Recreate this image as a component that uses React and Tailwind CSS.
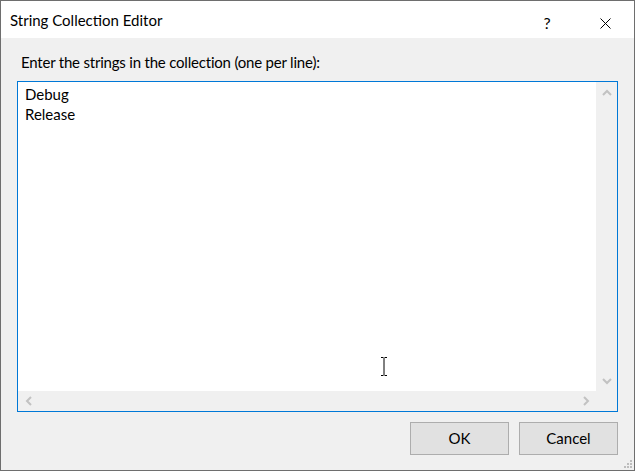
import React from 'react';

const font = { fontFamily: 'Lato, "Noto Sans", "Liberation Sans", sans-serif' };

const Chevron = ({ dir }) => {
  const paths = {
    up: 'M1 6 L5 2 L9 6',
    down: 'M1 2 L5 6 L9 2',
    left: 'M6 1 L2 5 L6 9',
    right: 'M2 1 L6 5 L2 9',
  };
  const vertical = dir === 'up' || dir === 'down';
  return (
    <svg
      width={vertical ? 10 : 8}
      height={vertical ? 8 : 10}
      viewBox={vertical ? '0 0 10 8' : '0 0 8 10'}
      fill="none"
      stroke="#c2c2c2"
      strokeWidth="2"
    >
      <path d={paths[dir]} />
    </svg>
  );
};

const App = () => {
  return (
    <div
      className="relative flex h-[471px] w-[635px] flex-col border border-[#6e6e6e] bg-[#f0f0f0] text-[15px] text-black"
      style={font}
    >
      {/* title bar */}
      <div className="flex h-[37px] bg-white">
        <div className="flex-1 pl-[9px] pt-[9px] leading-[20px]">String Collection Editor</div>
        <div className="flex w-[58px] justify-center pt-[12px] text-[16px] leading-[20px]">?</div>
        <div className="flex w-[58px] justify-center pt-[17px]">
          <svg width="11" height="11" viewBox="0 0 11 11" stroke="#000" strokeWidth="1">
            <path d="M0.5 0.5 L10.5 10.5 M10.5 0.5 L0.5 10.5" />
          </svg>
        </div>
      </div>

      {/* body */}
      <div className="flex flex-1 flex-col px-[16px]">
        <div className="pl-[4px] pt-[14px] leading-[20px] tracking-[-0.2px]">
          Enter the strings in the collection (one per line):
        </div>

        <div className="mt-[9px] flex h-[331px] w-[601px] flex-col border border-[#0078d7] bg-white">
          <div className="flex flex-1">
            <div className="flex-1 pl-[7px] pt-[2px] leading-[20px]">
              <div>Debug</div>
              <div>Release</div>
            </div>
            <div className="flex w-[21px] flex-col items-center justify-between bg-[#f0f0f0] pb-[6px] pt-[7px]">
              <Chevron dir="up" />
              <Chevron dir="down" />
            </div>
          </div>
          <div className="flex h-[20px] bg-[#f0f0f0]">
            <div className="ml-[1px] flex flex-1 items-center justify-between pl-[6px] pr-[6px]">
              <Chevron dir="left" />
              <Chevron dir="right" />
            </div>
            <div className="w-[21px]" />
          </div>
        </div>

        <div className="mt-[10px] flex justify-end gap-[10px]">
          <button className="h-[33px] w-[99px] border border-[#adadad] bg-[#e1e1e1] pb-[2px] leading-[20px]">OK</button>
          <button className="h-[33px] w-[99px] border border-[#adadad] bg-[#e1e1e1] pb-[2px] leading-[20px]">Cancel</button>
        </div>
      </div>

      {/* text cursor */}
      <svg className="absolute left-[379px] top-[356px]" width="8" height="19" viewBox="0 0 8 19" stroke="#000" strokeWidth="1" fill="none">
        <path d="M1 0.5 H3.5 M4.5 0.5 H7 M4 1 V18 M1 18.5 H3.5 M4.5 18.5 H7" />
      </svg>

      {/* resize grip */}
      <svg className="absolute bottom-[1px] right-[1px]" width="9" height="9" viewBox="0 0 9 9" fill="#bdbdbd">
        <rect x="6" y="0" width="2" height="2" />
        <rect x="3" y="3" width="2" height="2" />
        <rect x="6" y="3" width="2" height="2" />
        <rect x="0" y="6" width="2" height="2" />
        <rect x="3" y="6" width="2" height="2" />
        <rect x="6" y="6" width="2" height="2" />
      </svg>
    </div>
  );
};

export default App;
